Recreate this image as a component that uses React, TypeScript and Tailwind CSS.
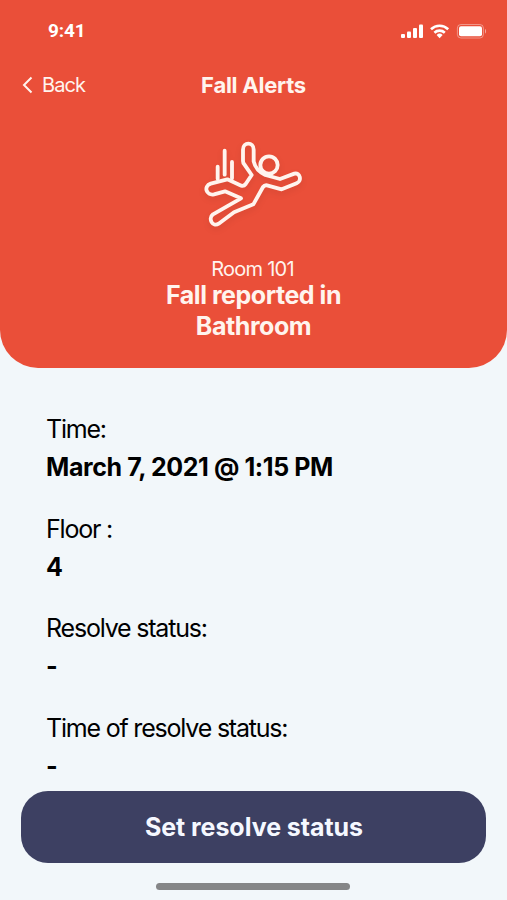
const details = [
  { label: "Time:", value: "March 7, 2021 @ 1:15 PM" },
  { label: "Floor :", value: "4" },
  { label: "Resolve status:", value: "-" },
  { label: "Time of resolve status:", value: "-" },
];

const StatusIcons = () => (
  <svg width="88" height="16" viewBox="0 0 88 16" fill="#fff">
    <rect x="1" y="11" width="4" height="4" rx="1" />
    <rect x="7" y="8.5" width="4" height="6.5" rx="1" />
    <rect x="13" y="5" width="4" height="10" rx="1" />
    <rect x="19" y="1.5" width="4" height="13.5" rx="1" />
    <g fill="none" stroke="#fff" strokeWidth="2.6">
      <path d="M31 6.2a12.5 12.5 0 0 1 17.2 0" />
      <path d="M34.4 9.7a7.6 7.6 0 0 1 10.4 0" />
    </g>
    <path d="M36.6 12a4.4 4.4 0 0 1 6 0l-3 3.2z" />
    <rect
      x="57.4"
      y="1.5"
      width="26"
      height="13.5"
      rx="3.5"
      fill="none"
      stroke="#fff"
      strokeOpacity="0.4"
    />
    <rect x="59" y="3.2" width="23" height="10" rx="2" />
    <path d="M85 6v4.5c1.4-.5 1.4-4 0-4.5z" fillOpacity="0.5" />
  </svg>
);

const FallIcon = () => (
  <svg
    width="125"
    height="110"
    viewBox="0 0 375 330"
    fill="none"
    stroke="#fff4ee"
    strokeWidth="11.5"
    strokeLinecap="round"
    strokeLinejoin="round"
    className="mr-0.5 drop-shadow-[0_3px_3px_rgba(0,0,0,0.08)]"
  >
    <path d="M83 110v36M104 62v72M126 96v49" />
    <circle cx="237" cy="105" r="26" />
    <path d="M159 59c0-24 32-24 32 0v35c5 22 18 33 35 41l44 12 43-16c17-5 24 22 7 29l-45 18-44-12c-6-1-9 1-12 5l-29 52-58 24-46 34c-18 12-33-15-17-28l84-48-48-21-33 9c-24 5-32-25-10-32l50-13 42 19c6 2 10-1 13-5l18-27-22-32c-3-3-4-6-4-10z" />
  </svg>
);

const App = () => {
  return (
    <div className="flex h-[900px] w-full flex-col overflow-hidden bg-[#f2f7fa] font-['Inter',sans-serif] text-black">
      <header className="h-[368px] shrink-0 rounded-b-[38px] bg-[#ea4f39] text-[#fff4ee]">
        <div className="flex h-[61px] items-center justify-between pr-[19px] pl-12">
          <span className="pt-px font-['Roboto',sans-serif] text-[19px] font-bold tracking-[-0.1px] text-white">
            9:41
          </span>
          <StatusIcons />
        </div>

        <nav className="grid h-12 grid-cols-3 items-center px-[22px]">
          <button className="flex items-center gap-[9px] text-[20px] tracking-[-0.9px]">
            <svg
              width="11"
              height="18"
              viewBox="0 0 11 18"
              fill="none"
              stroke="currentColor"
              strokeWidth="2"
            >
              <path d="M9.5 1.5 2 9l7.5 7.5" />
            </svg>
            Back
          </button>
          <h1 className="text-center text-[22px] font-bold tracking-[-0.25px] whitespace-nowrap">
            Fall Alerts
          </h1>
        </nav>

        <div className="flex flex-col items-center pt-[21px] text-center">
          <FallIcon />
          <p className="mt-[18px] mr-0.5 text-[20px] leading-[22px] tracking-[-0.75px]">
            Room 101
          </p>
          <h2 className="w-[200px] text-[25px] leading-[31px] font-bold tracking-[-0.45px]">
            Fall reported in Bathroom
          </h2>
        </div>
      </header>

      <dl className="flex h-[423px] shrink-0 flex-col gap-[25.5px] pt-[43px] pl-[46px]">
        {details.map((item) => (
          <div key={item.label} className="text-[25px] leading-[37px]">
            <dt className="tracking-[-1.2px]">{item.label}</dt>
            <dd className="pt-px leading-9 font-bold tracking-[-0.4px]">
              {item.value}
            </dd>
          </div>
        ))}
      </dl>

      <div className="flex flex-col items-center px-[21px]">
        <button className="h-[72px] w-full rounded-[27px] bg-[#3d4062] pt-0.5 pl-px text-[25px] font-bold tracking-[-0.05px] text-[#f5f8ff]">
          Set resolve status
        </button>
        <div className="mt-5 mr-px h-[7px] w-[194px] rounded-full bg-[#858687]" />
      </div>
    </div>
  );
};

export default App;
